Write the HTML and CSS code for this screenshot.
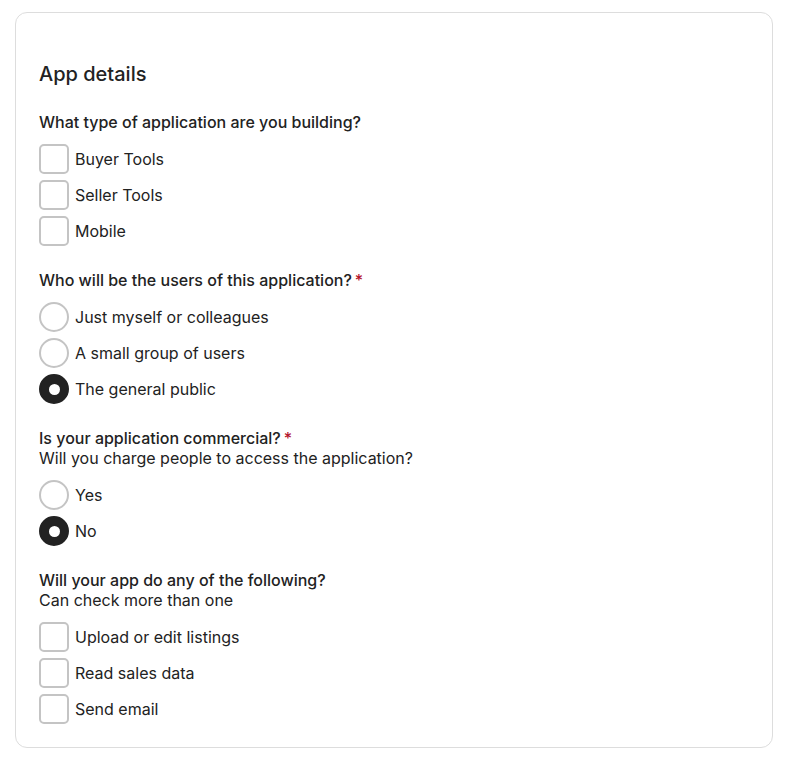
FILE: index.html
```html
<!DOCTYPE html>
<html lang="en">
<head>
  <meta charset="UTF-8">
  <title>App details</title>
  <link rel="stylesheet" href="styles.css">
</head>
<body>

<div class="card">
  <h2 class="title">App details</h2>

  <div class="group">
    <div class="label">What type of application are you building?</div>
    <div class="options">
      <label class="option"><span class="box"></span>Buyer Tools</label>
      <label class="option"><span class="box"></span>Seller Tools</label>
      <label class="option"><span class="box"></span>Mobile</label>
    </div>
  </div>

  <div class="group">
    <div class="label">Who will be the users of this application?<span class="req">*</span></div>
    <div class="options">
      <label class="option"><span class="radio"></span>Just myself or colleagues</label>
      <label class="option"><span class="radio"></span>A small group of users</label>
      <label class="option"><span class="radio checked"></span>The general public</label>
    </div>
  </div>

  <div class="group">
    <div class="label">Is your application commercial?<span class="req">*</span></div>
    <div class="hint">Will you charge people to access the application?</div>
    <div class="options">
      <label class="option"><span class="radio"></span>Yes</label>
      <label class="option"><span class="radio checked"></span>No</label>
    </div>
  </div>

  <div class="group">
    <div class="label">Will your app do any of the following?</div>
    <div class="hint">Can check more than one</div>
    <div class="options">
      <label class="option"><span class="box"></span>Upload or edit listings</label>
      <label class="option"><span class="box"></span>Read sales data</label>
      <label class="option"><span class="box"></span>Send email</label>
    </div>
  </div>
</div>

</body>
</html>
```

FILE: styles.css
```css
body {
  margin: 0;
  padding: 12px 19px 0 15px;
  font-family: Inter, "Noto Sans", sans-serif;
  color: #222;
  background: #fff;
}

.card {
  border: 1px solid #ddd;
  border-radius: 12px;
  padding: 47px 23px 23px 23px;
  display: flex;
  flex-direction: column;
  gap: 24px;
}

.title {
  margin: 0;
  font-size: 20px;
  line-height: 28px;
  font-weight: 500;
}

.label {
  font-size: 16px;
  line-height: 20px;
  font-weight: 500;
}

.req {
  color: #b3122b;
  margin-left: 3px;
}

.hint {
  font-size: 16px;
  line-height: 20px;
}

.options {
  margin-top: 12px;
  display: flex;
  flex-direction: column;
  gap: 6px;
}

.option {
  display: flex;
  align-items: center;
  gap: 6px;
  height: 30px;
  font-size: 16px;
}

.box {
  width: 26px;
  height: 26px;
  border: 2px solid #c4c4c4;
  border-radius: 5px;
}

.radio {
  width: 26px;
  height: 26px;
  border: 2px solid #c4c4c4;
  border-radius: 50%;
  display: flex;
  align-items: center;
  justify-content: center;
}

.radio.checked {
  border-color: #222;
  background: #222;
}

.radio.checked::after {
  content: "";
  width: 11px;
  height: 11px;
  border-radius: 50%;
  background: #fff;
}
```
